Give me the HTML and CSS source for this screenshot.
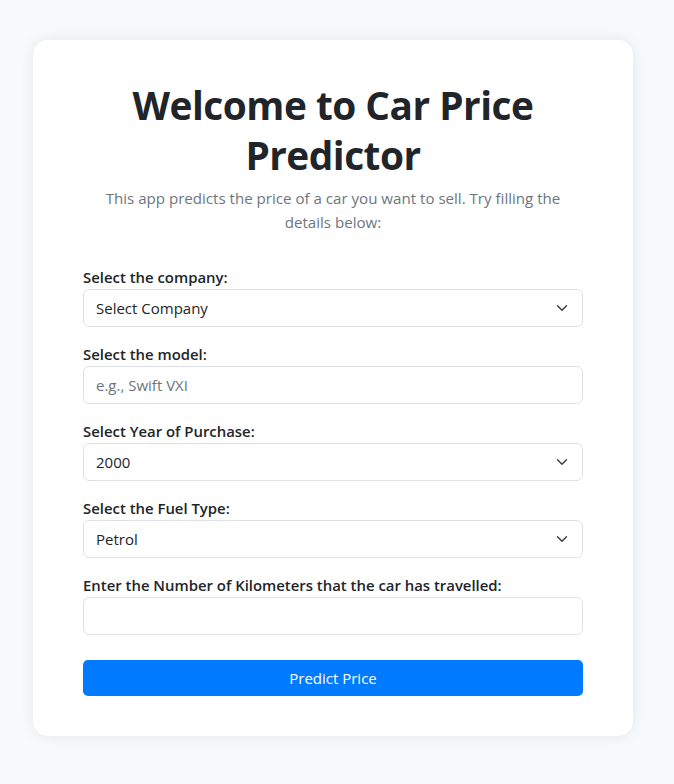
FILE: index.html
```html
<!DOCTYPE html>
<html lang="en">
<head>
<meta charset="utf-8">
<title>Car Price Predictor</title>
<link rel="stylesheet" href="styles.css">
</head>
<body>
<div class="card">
  <h1 class="title">Welcome to Car Price Predictor</h1>
  <p class="lead">This app predicts the price of a car you want to sell. Try filling the details below:</p>
  <form class="form">
    <div class="group">
      <label class="label">Select the company:</label>
      <div class="select"><span>Select Company</span><svg class="chev" viewBox="0 0 16 16" width="16" height="16"><path d="M2 5l6 6 6-6" fill="none" stroke="#343a40" stroke-width="2" stroke-linecap="round" stroke-linejoin="round"/></svg></div>
    </div>
    <div class="group">
      <label class="label">Select the model:</label>
      <div class="input placeholder">e.g., Swift VXI</div>
    </div>
    <div class="group">
      <label class="label">Select Year of Purchase:</label>
      <div class="select"><span>2000</span><svg class="chev" viewBox="0 0 16 16" width="16" height="16"><path d="M2 5l6 6 6-6" fill="none" stroke="#343a40" stroke-width="2" stroke-linecap="round" stroke-linejoin="round"/></svg></div>
    </div>
    <div class="group">
      <label class="label">Select the Fuel Type:</label>
      <div class="select"><span>Petrol</span><svg class="chev" viewBox="0 0 16 16" width="16" height="16"><path d="M2 5l6 6 6-6" fill="none" stroke="#343a40" stroke-width="2" stroke-linecap="round" stroke-linejoin="round"/></svg></div>
    </div>
    <div class="group">
      <label class="label">Enter the Number of Kilometers that the car has travelled:</label>
      <div class="input"></div>
    </div>
    <button type="button" class="btn">Predict Price</button>
  </form>
</div>
</body>
</html>
```
FILE: styles.css
```css
html, body { margin: 0; padding: 0; }
body {
  background: #f8f9fa;
  font-family: "Open Sans", "Noto Sans", sans-serif;
  color: #212529;
  padding-top: 40px;
  min-height: 784px;
  box-sizing: border-box;
}
.card {
  width: 600px;
  margin: 0 0 0 33px;
  box-sizing: border-box;
  background: #fff;
  border-radius: 15px;
  box-shadow: 0 0 15px rgba(0,0,0,0.08);
  padding: 40px 50px 40px;
}
.title {
  margin: 0;
  text-align: center;
  font-size: 38.8px;
  line-height: 50px;
  font-weight: 700;
  letter-spacing: -0.5px;
  color: #212529;
}
.lead {
  margin: 6px 0 0;
  text-align: center;
  font-size: 15.1px;
  line-height: 24px;
  color: #6c757d;
}
.form { margin-top: 31px; }
.group { margin-bottom: 15px; }
.label {
  display: block;
  font-size: 14.9px;
  font-weight: 600;
  line-height: 24px;
  color: #212529;
}
.select, .input {
  height: 38px;
  box-sizing: border-box;
  border: 1px solid #dee2e6;
  border-radius: 6px;
  padding: 0 12px;
  display: flex;
  align-items: center;
  justify-content: space-between;
  font-size: 15px;
  color: #212529;
}
.placeholder { color: #6c757d; }
.chev { width: 12px; height: 12px; margin-right: 2px; }
.chev path { stroke-width: 1.8; }
.btn {
  display: block;
  width: 100%;
  height: 36px;
  margin-top: 25px;
  border: 0;
  border-radius: 5px;
  background: #007bff;
  color: #fff;
  font-family: inherit;
  font-size: 15px;
}
```
